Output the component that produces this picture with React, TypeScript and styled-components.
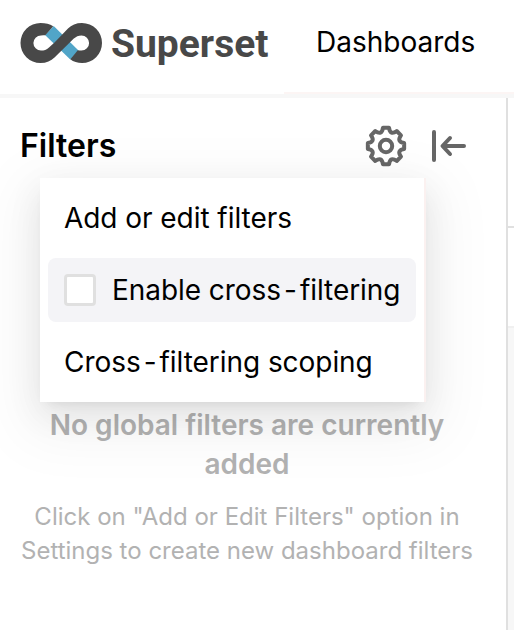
import React from "react";
import styled, { createGlobalStyle } from "styled-components";

const GlobalStyle = createGlobalStyle`
  * { box-sizing: border-box; }
  body { margin: 0; background: #fff; overflow: hidden; }
`;

const Page = styled.div`
  width: 514px;
  height: 630px;
  display: flex;
  flex-direction: column;
  overflow: hidden;
  font-family: Inter, "Liberation Sans", sans-serif;
  color: #000;
`;

const Header = styled.header`
  flex: none;
  height: 98px;
  display: flex;
  align-items: flex-start;
  background:
    linear-gradient(#fcf5f4, #fcf5f4) 284px 92px / 230px 2px no-repeat,
    linear-gradient(#f7f7f7, #f7f7f7) 0 94px / 100% 4px no-repeat,
    #fff;
`;

const Logo = styled.div`
  display: flex;
  width: 297px;
  padding-left: 20px;
  height: 86px;
  align-items: center;
`;

const LogoName = styled.span`
  margin: 2px 0 0 8px;
  font: 700 39px/46px Roboto, sans-serif;
  color: #484848;
`;

const NavLink = styled.a`
  margin-left: 19px;
  font-size: 28px;
  line-height: 85px;
`;

const Main = styled.div`
  flex: 1;
  display: flex;
`;

const Panel = styled.aside`
  position: relative;
  width: 508px;
  border-right: 2px solid #e0e0e0;
  display: flex;
  flex-direction: column;
`;

const PanelBar = styled.div`
  display: flex;
  align-items: center;
  height: 96px;
  padding: 0 40px 0 20px;
`;

const Title = styled.h2`
  flex: 1;
  margin: 0;
  font-size: 32px;
  font-weight: 600;
  line-height: 40px;
`;

const IconButton = styled.button<{ $gap?: number }>`
  display: flex;
  padding: 0;
  border: 0;
  background: none;
  margin-left: ${(p) => p.$gap ?? 0}px;
`;

const Menu = styled.div`
  position: absolute;
  z-index: 1;
  top: 80px;
  left: 40px;
  width: 386px;
  height: 224px;
  padding: 8px;
  display: flex;
  flex-direction: column;
  gap: 8px;
  background: #fff;
  border-right: 2px solid #fbf1f0;
  box-shadow: 0 12px 32px rgba(0, 0, 0, 0.08), 0 6px 12px -8px rgba(0, 0, 0, 0.12),
    0 18px 56px 16px rgba(0, 0, 0, 0.05);
`;

const MenuItem = styled.div<{ $active?: boolean }>`
  height: 64px;
  display: flex;
  align-items: center;
  padding: 0 16px;
  border-radius: 8px;
  white-space: nowrap;
  font-size: 28px;
  letter-spacing: -0.05px;
  background: ${(p) => (p.$active ? "#f4f4f7" : "transparent")};
`;

const Hyphen = styled.span`
  margin: 0 3px;
`;

const Checkbox = styled.span`
  flex: none;
  width: 32px;
  height: 32px;
  margin-right: 16px;
  border: 3px solid #e0e0e0;
  border-radius: 4px;
  background: #fff;
`;

const Empty = styled.div`
  display: flex;
  flex-direction: column;
  align-items: center;
  padding-top: 212px;
  text-align: center;
  color: #b2b2b2;
  white-space: nowrap;
`;

const EmptyTitle = styled.div`
  width: 480px;
  margin-left: -12px;
  font-size: 28px;
  font-weight: 600;
  line-height: 39px;
`;

const EmptyText = styled.p`
  margin: 16px 0 0 -12px;
  font-size: 24px;
  line-height: 34px;
`;

const Content = styled.main`
  flex: 1;
  display: flex;
  flex-direction: column;
  background: #f7f7f7;
`;

const Strip = styled.div<{ $height: number; $line: string }>`
  height: ${(p) => p.$height}px;
  background: #fff;
  border-bottom: 2px solid ${(p) => p.$line};
`;

const polar = (r: number, deg: number) => {
  const a = (deg * Math.PI) / 180;
  return `${(21 + r * Math.cos(a)).toFixed(2)} ${(21 + r * Math.sin(a)).toFixed(2)}`;
};

const gearPath =
  Array.from({ length: 8 }, (_, i) => {
    const a = i * 45;
    return `${i ? "L" : "M"}${polar(18.4, a - 9.5)} L${polar(18.4, a + 9.5)} Q${polar(11.2, a + 22.5)} ${polar(18.4, a + 35.5)}`;
  }).join(" ") + "Z";

const GearIcon = () => (
  <svg width="42" height="42" fill="none" stroke="#666" strokeWidth="4" strokeLinejoin="round">
    <path d={gearPath} />
    <circle cx="21" cy="21" r="6.2" />
  </svg>
);

const CollapseIcon = () => (
  <svg width="36" height="34" fill="none" stroke="#666" strokeWidth="4" strokeLinecap="round" strokeLinejoin="round">
    <path d="M4 3V31M34 17H13M20 9L12.5 17L20 25" />
  </svg>
);

const InfinityMark = () => (
  <svg width="83" height="42" viewBox="20 22 83 42">
    <path d="M53.7 26L78.5 50.4L70.3 59.4L45 35Z" fill="#51a5c8" />
    <path
      d="M53.2 26.2C49.8 23.9 45.5 23 40.5 23A20 20 0 0 0 40.5 63C46.5 63 51 61 54.5 57.5L69 43.2L73.5 38.8C76 36.5 78.5 35.4 81.5 35.4A7.6 7.6 0 0 1 81.5 50.6C80.2 50.6 79 50.5 77.8 50.2L70.3 59.3C73.5 62 77.5 63 82 63A20 20 0 0 0 82 23C76 23 71.5 25 68 28.5L54.5 42.5L49 47.5C46.5 49.8 44 50.6 41 50.6A7.6 7.6 0 0 1 41 35.4C42.5 35.4 44 35.3 45.3 35.3Z"
      fill="#484848"
    />
  </svg>
);

export default function App() {
  return (
    <>
      <GlobalStyle />
      <Page>
        <Header>
          <Logo>
            <InfinityMark />
            <LogoName>Superset</LogoName>
          </Logo>
          <NavLink>Dashboards</NavLink>
        </Header>
        <Main>
          <Panel>
            <PanelBar>
              <Title>Filters</Title>
              <IconButton aria-label="Settings">
                <GearIcon />
              </IconButton>
              <IconButton aria-label="Collapse" $gap={23}>
                <CollapseIcon />
              </IconButton>
            </PanelBar>
            <Menu>
              <MenuItem>Add or edit filters</MenuItem>
              <MenuItem $active>
                <Checkbox />
                <span>
                  Enable cross<Hyphen>-</Hyphen>filtering
                </span>
              </MenuItem>
              <MenuItem>
                <span>
                  Cross<Hyphen>-</Hyphen>filtering scoping
                </span>
              </MenuItem>
            </Menu>
            <Empty>
              <EmptyTitle>
                No global filters are currently
                <br />
                added
              </EmptyTitle>
              <EmptyText>
                Click on "Add or Edit Filters" option in
                <br />
                Settings to create new dashboard filters
              </EmptyText>
            </Empty>
          </Panel>
          <Content>
            <Strip $height={130} $line="#e0e0e0" />
            <Strip $height={100} $line="#f0f0f0" />
          </Content>
        </Main>
      </Page>
    </>
  );
}
